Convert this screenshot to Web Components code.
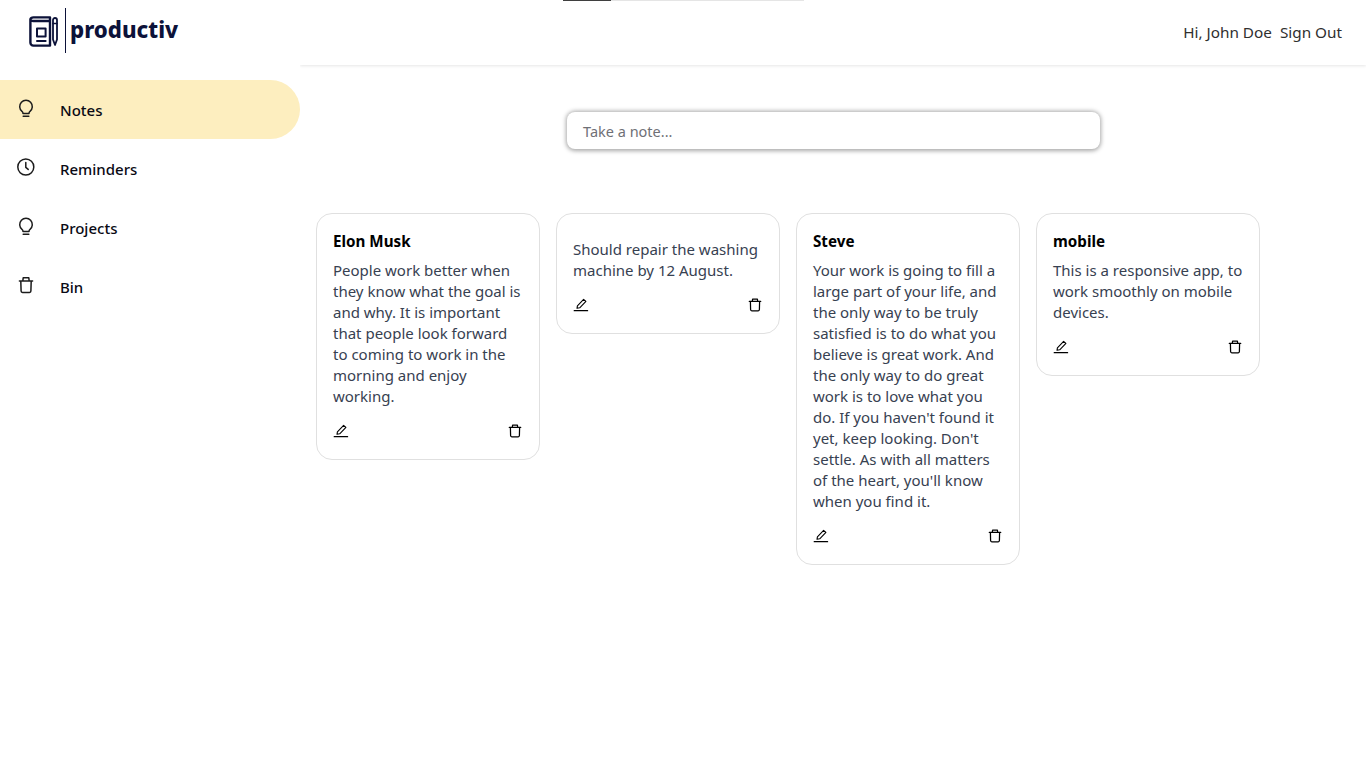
<!DOCTYPE html>
<html lang="en"><head><meta charset="utf-8"><title>productiv</title>
<style>
html,body{margin:0;padding:0;background:#fff;font-family:"Noto Sans","Open Sans",sans-serif}
</style></head><body>
<app-shell>
  <brand-logo slot="brand"></brand-logo>
  <nav-item slot="nav" icon="bulb" active>Notes</nav-item>
  <nav-item slot="nav" icon="clock">Reminders</nav-item>
  <nav-item slot="nav" icon="bulb">Projects</nav-item>
  <nav-item slot="nav" icon="trash">Bin</nav-item>
  <top-bar slot="top"></top-bar>
  <note-input slot="input"></note-input>
  <note-card slot="cards" title="Elon Musk">People work better when they know what the goal is and why. It is important that people look forward to coming to work in the morning and enjoy working.</note-card>
  <note-card slot="cards">Should repair the washing machine by 12 August.</note-card>
  <note-card slot="cards" title="Steve">Your work is going to fill a large part of your life, and the only way to be truly satisfied is to do what you believe is great work. And the only way to do great work is to love what you do. If you haven't found it yet, keep looking. Don't settle. As with all matters of the heart, you'll know when you find it.</note-card>
  <note-card slot="cards" title="mobile">This is a responsive app, to work smoothly on mobile devices.</note-card>
</app-shell>
<script>
const ICONS={
 bulb:'<path d="M7 15.4A6.3 6.3 0 1 1 15 15.4C14.2 16 14 16.6 14 17.4H8C8 16.6 7.8 16 7 15.4Z"/><path d="M8.2 20.2H13.8"/>',
 clock:'<circle cx="10.8" cy="12" r="8"/><path d="M10.8 7.4V12.4L13.2 14.4"/>',
 trash:'<path d="M4.4 8H17.6M5.8 8 6.1 18C6.1 18.9 6.7 19.4 7.5 19.4H14.5C15.3 19.4 15.9 18.9 15.9 18L16.2 8M7.8 8 8.2 4.8H13.8L14.2 8"/>'
};
class Base extends HTMLElement{
  constructor(){super();this.attachShadow({mode:"open"});}
  render(h){this.shadowRoot.innerHTML=h;}
}
customElements.define("app-shell",class extends Base{connectedCallback(){this.render(`<style>
:host{display:grid;grid-template-columns:300px 1fr;min-height:768px;position:relative}
aside{display:flex;flex-direction:column;position:relative;z-index:1;background:#fff}
.b{height:80px}
main{display:flex;flex-direction:column;min-width:0}
.i{display:flex;justify-content:center;padding-top:47px;padding-left:1px}
.c{display:flex;align-items:flex-start;gap:16px;padding:64px 16px 0}
.p{position:absolute;left:563px;top:0;width:241px;height:1px;background:#e5e5e5;z-index:2}
.p i{display:block;width:48px;height:1px;background:#3f3f3f}
</style><div class="p"><i></i></div>
<aside><div class="b"><slot name="brand"></slot></div><slot name="nav"></slot></aside>
<main><slot name="top"></slot><div class="i"><slot name="input"></slot></div><div class="c"><slot name="cards"></slot></div></main>`);}});
customElements.define("brand-logo",class extends Base{connectedCallback(){this.render(`<style>
:host{display:flex;align-items:flex-start;padding:8px 0 0 29px;color:#0c1239}
svg{display:block;margin-top:8px}
.d{width:1px;height:45px;background:#0c1239;margin:0 4px 0 7px}
span{font:800 22.2px/1 "Noto Sans",sans-serif;margin-top:11px}
</style><svg width="29" height="31" viewBox="0 0 29 31" fill="none" stroke="#0c1239" stroke-width="2.4" stroke-linejoin="round" stroke-linecap="round">
<path d="M21 5H4.4C2.6 5 1.4 4.2 1.4 3.2 1.4 2.2 2.6 1.4 4.4 1.4H21V29.6H4.4C2.6 29.6 1.4 28.4 1.4 26.6V3.2"/>
<rect x="8" y="12.4" width="8.6" height="8" stroke-width="2"/><path d="M8 25H16.6" stroke-width="2"/>
<path d="M26 2C27.2 2 28 3 28 4V23.5L26 29 24 23.5V4C24 3 24.8 2 26 2Z" stroke-width="1.8"/><path d="M24 7.5H28" stroke-width="1.5"/>
</svg><div class="d"></div><span>productiv</span>`);}});
customElements.define("nav-item",class extends Base{connectedCallback(){const a=this.hasAttribute("active");this.render(`<style>
:host{display:flex;align-items:center;height:59px;box-sizing:border-box;padding-left:15px;border-radius:0 30px 30px 0;${a?"background:#fdeebf;":""}color:#0a0a14;font:500 15px "Noto Sans",sans-serif}
svg{display:block;flex:none;margin:-5px 23px 0 0}
</style><svg width="22" height="22" viewBox="0 0 22 22" fill="none" stroke="#1c1c1c" stroke-width="1.5" stroke-linecap="round" stroke-linejoin="round">${ICONS[this.getAttribute("icon")]}</svg><slot></slot>`);}});
customElements.define("top-bar",class extends Base{connectedCallback(){this.render(`<style>
:host{display:flex;justify-content:flex-end;align-items:center;gap:8px;height:65px;box-sizing:border-box;padding:0 24px 0 0;box-shadow:0 1px 3px rgba(0,0,0,.1);color:#2f2f2f;font:400 15.3px/1 "Noto Sans",sans-serif}
</style><span>Hi, John Doe</span><span>Sign Out</span>`);}});
customElements.define("note-input",class extends Base{connectedCallback(){this.render(`<style>
:host{display:flex;align-items:center;width:533px;height:37px;box-sizing:border-box;padding:0 16px;background:#fff;border-radius:8px;box-shadow:0 .5px 4px 1px rgba(0,0,0,.34);color:#6f7076;font:400 14.5px "Noto Sans",sans-serif}
</style><span>Take a note...</span>`);}});
customElements.define("note-card",class extends Base{connectedCallback(){const t=this.getAttribute("title");this.removeAttribute("title");this.render(`<style>
:host{display:block;width:224px;box-sizing:border-box;flex:none;padding:16px;border:1px solid #e0e0e0;border-radius:16px;background:#fff;font:400 15px/21px "Noto Sans",sans-serif;color:#374151}
h3{margin:0;font:700 15.2px/21px "Noto Sans",sans-serif;color:#000;position:relative;top:1px}
.t{margin-bottom:9px}
.f{display:flex;justify-content:space-between;align-items:flex-start;height:20px;margin-top:16px}
svg{display:block}
</style><div class="t"><h3>${t||""}</h3></div><div><slot></slot></div>
<div class="f"><svg width="16" height="16" viewBox="0 0 16 16" fill="none" stroke="#000" stroke-width="1.1" stroke-linejoin="round" stroke-linecap="round"><path d="M4.4 8.8 10.6 2.3 12.9 4.4 6.7 10.8 4 11.3Z"/><path d="M1.2 13.7H14.6" stroke-width="1.2"/></svg>
<svg width="16" height="16" viewBox="0 0 16 16" fill="none" stroke="#000" stroke-width="1.25" stroke-linecap="round" stroke-linejoin="round"><path d="M2.3 4.4H13.7M3.4 4.4 3.6 12.6C3.6 13.4 4.1 13.8 4.8 13.8H11.2C11.9 13.8 12.4 13.4 12.4 12.6L12.6 4.4M5.3 4.4 5.6 2.2H10.4L10.7 4.4"/></svg></div>`);}});
</script></body></html>
